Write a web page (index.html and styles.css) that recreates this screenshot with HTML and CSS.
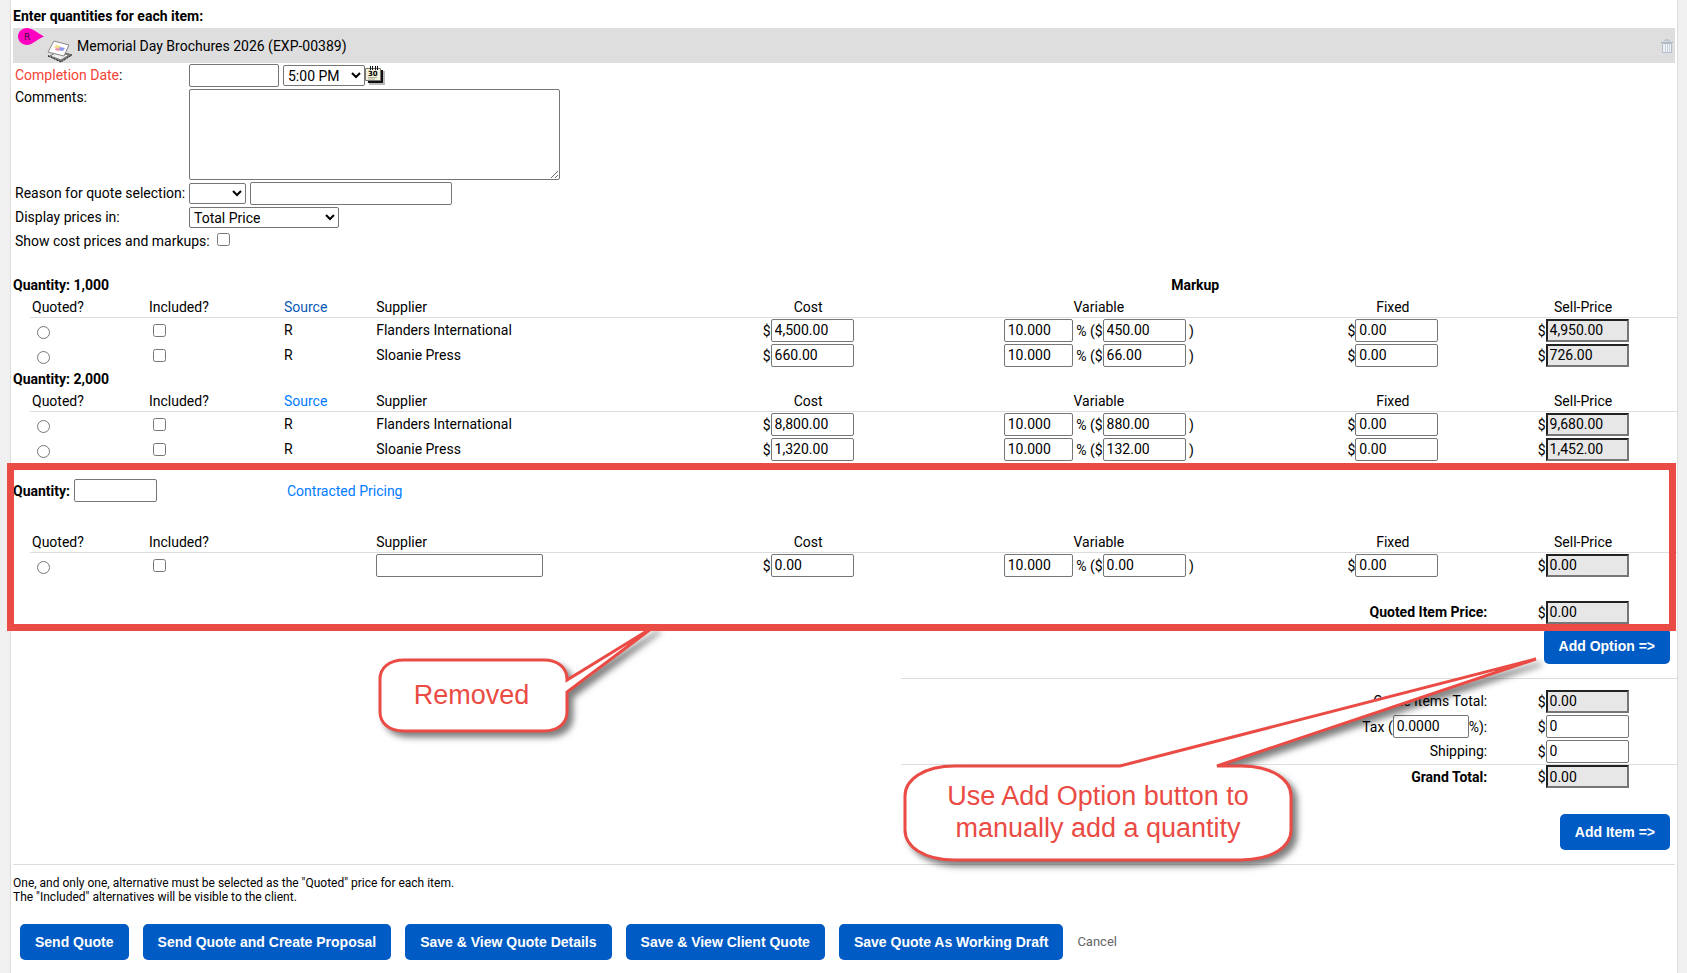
FILE: index.html
```html
<!DOCTYPE html>
<html lang="en">
<head>
<meta charset="utf-8">
<title>Quote quantities</title>
<link rel="stylesheet" href="styles.css">
</head>
<body>
<form class="page">
  <h1 class="title">Enter quantities for each item:</h1>

  <header class="item-bar">
    <svg class="tag-icon" width="26" height="17" viewBox="0 0 26 17" aria-hidden="true">
      <path d="M9 0C14 0 18 4 26 8.500C18 12 14 17 9 17C4 17 0 13 0 8.500C0 4 4 0 9 0Z" fill="#ff00c0"/>
      <text class="tag-letter" x="6" y="12">R</text>
    </svg>
    <svg class="item-icon" width="26" height="23" viewBox="0 0 26 23" aria-hidden="true">
      <path d="M1 16L14 22L25 15L18 13Z" fill="#777" stroke="#222" stroke-dasharray="2 1"/>
      <path d="M3 16L14 20L22 15L10 12Z" fill="#eee" stroke="#777"/>
      <path d="M7 1L22 5L17 16L1 12Z" fill="#fff" stroke="#888"/>
      <path d="M9 5L14 6L12 9L7 8Z" fill="#f2dc8c"/>
      <path d="M13 7L18 8L16 11L11 10Z" fill="#8d9bea"/>
      <path d="M9 8L13 9L12 11L8 10Z" fill="#ef8db5"/>
    </svg>
    <span class="item-name">Memorial Day Brochures 2026 (EXP-00389)</span>
    <button type="button" class="trash" aria-label="Delete item">
      <svg width="12" height="16" viewBox="0 0 12 16" aria-hidden="true">
        <path d="M4 3V2H8V3" fill="none" stroke="#a9b2bd"/>
        <path d="M1.500 5.500H10.500V14.500H1.500Z" fill="#eef2f6" stroke="#b4bdc8"/>
        <path d="M4.500 6V14M6.500 6V14M8.500 6V14" stroke="#ccd4dd"/>
        <path d="M0 4.500H12" stroke="#aeb8c3"/>
        <path d="M1 3.500H11" stroke="#d5dce4"/>
      </svg>
    </button>
  </header>

  <section class="details">
    <div class="field">
      <label class="name" for="date"><span class="required">Completion Date</span>:</label>
      <input id="date" class="box w-date" type="text">
      <select class="pick w-time" aria-label="Completion time"><option>5:00 PM</option></select>
      <svg class="calendar" width="21" height="20" viewBox="0 0 21 20" aria-hidden="true">
        <path d="M4 5H20V19H4Z" fill="#bbb"/>
        <path d="M3 4H18V17H3Z" fill="#111"/>
        <path d="M.5 2.500H15.500V14.500H.5Z" fill="#f4f2dc" stroke="#777"/>
        <path d="M3 11.500H12M3 13H10" stroke="#b5b29a"/>
        <path d="M5.500 0V4M7.500 0V4M10.500 0V4M12.500 0V4" stroke="#111"/>
        <text class="calendar-day" x="3" y="10">30</text>
      </svg>
    </div>
    <div class="field field-top">
      <label class="name" for="comments">Comments:</label>
      <textarea id="comments" class="comments"></textarea>
    </div>
    <div class="field">
      <label class="name" for="reason">Reason for quote selection:</label>
      <select id="reason" class="pick w-reason"><option></option></select>
      <input class="box w-note" type="text" aria-label="Reason details">
    </div>
    <div class="field field-short">
      <label class="name" for="display">Display prices in:</label>
      <select id="display" class="pick w-display"><option>Total Price</option></select>
    </div>
    <div class="field field-short">
      <label for="show-cost">Show cost prices and markups:</label>
      <input id="show-cost" class="show-cost" type="checkbox">
    </div>
  </section>

  <table class="prices">
    <colgroup><col class="c-edge"><col class="c-quoted"><col class="c-included"><col class="c-source"><col class="c-supplier"><col class="c-cost"><col class="c-variable"><col class="c-fixed"><col class="c-sell"></colgroup>
    <tr class="group"><th colspan="6">Quantity: 1,000</th><th colspan="2" class="mid">Markup</th><td></td></tr>
    <tr class="heads"><td></td><th>Quoted?</th><th>Included?</th><th><a href="#" class="visited">Source</a></th><th>Supplier</th><th class="mid">Cost</th><th class="mid">Variable</th><th class="mid">Fixed</th><th class="mid">Sell-Price</th></tr>
    <tr><td></td><td><input type="radio" name="quoted" aria-label="Quoted"></td><td><input type="checkbox" aria-label="Included"></td><td>R</td><td>Flanders International</td>
      <td class="mid">$<input class="box" value="4,500.00" aria-label="Cost"></td>
      <td class="mid"><input class="box w-rate" value="10.000" aria-label="Markup percent"> % ($<input class="box" value="450.00" aria-label="Markup amount"> )</td>
      <td class="mid">$<input class="box" value="0.00" aria-label="Fixed"></td>
      <td class="mid">$<input class="box locked" value="4,950.00" readonly aria-label="Sell-Price"></td></tr>
    <tr><td></td><td><input type="radio" name="quoted" aria-label="Quoted"></td><td><input type="checkbox" aria-label="Included"></td><td>R</td><td>Sloanie Press</td>
      <td class="mid">$<input class="box" value="660.00" aria-label="Cost"></td>
      <td class="mid"><input class="box w-rate" value="10.000" aria-label="Markup percent"> % ($<input class="box" value="66.00" aria-label="Markup amount"> )</td>
      <td class="mid">$<input class="box" value="0.00" aria-label="Fixed"></td>
      <td class="mid">$<input class="box locked" value="726.00" readonly aria-label="Sell-Price"></td></tr>
  </table>

  <table class="prices">
    <colgroup><col class="c-edge"><col class="c-quoted"><col class="c-included"><col class="c-source"><col class="c-supplier"><col class="c-cost"><col class="c-variable"><col class="c-fixed"><col class="c-sell"></colgroup>
    <tr class="group"><th colspan="9">Quantity: 2,000</th></tr>
    <tr class="heads"><td></td><th>Quoted?</th><th>Included?</th><th><a href="#">Source</a></th><th>Supplier</th><th class="mid">Cost</th><th class="mid">Variable</th><th class="mid">Fixed</th><th class="mid">Sell-Price</th></tr>
    <tr><td></td><td><input type="radio" name="quoted" aria-label="Quoted"></td><td><input type="checkbox" aria-label="Included"></td><td>R</td><td>Flanders International</td>
      <td class="mid">$<input class="box" value="8,800.00" aria-label="Cost"></td>
      <td class="mid"><input class="box w-rate" value="10.000" aria-label="Markup percent"> % ($<input class="box" value="880.00" aria-label="Markup amount"> )</td>
      <td class="mid">$<input class="box" value="0.00" aria-label="Fixed"></td>
      <td class="mid">$<input class="box locked" value="9,680.00" readonly aria-label="Sell-Price"></td></tr>
    <tr><td></td><td><input type="radio" name="quoted" aria-label="Quoted"></td><td><input type="checkbox" aria-label="Included"></td><td>R</td><td>Sloanie Press</td>
      <td class="mid">$<input class="box" value="1,320.00" aria-label="Cost"></td>
      <td class="mid"><input class="box w-rate" value="10.000" aria-label="Markup percent"> % ($<input class="box" value="132.00" aria-label="Markup amount"> )</td>
      <td class="mid">$<input class="box" value="0.00" aria-label="Fixed"></td>
      <td class="mid">$<input class="box locked" value="1,452.00" readonly aria-label="Sell-Price"></td></tr>
  </table>

  <section class="custom">
    <table class="prices">
      <colgroup><col class="c-edge"><col class="c-quoted"><col class="c-included"><col class="c-source"><col class="c-supplier"><col class="c-cost"><col class="c-variable"><col class="c-fixed"><col class="c-sell"></colgroup>
      <tr class="quantity-row"><th colspan="3"><label for="quantity">Quantity:</label> <input id="quantity" class="box" type="text"></th><td colspan="6" class="contracted"><a href="#">Contracted Pricing</a></td></tr>
      <tr class="heads"><td></td><th>Quoted?</th><th>Included?</th><th></th><th>Supplier</th><th class="mid">Cost</th><th class="mid">Variable</th><th class="mid">Fixed</th><th class="mid">Sell-Price</th></tr>
      <tr><td></td><td><input type="radio" name="quoted" aria-label="Quoted"></td><td><input type="checkbox" aria-label="Included"></td><td></td><td><input class="box w-supplier" aria-label="Supplier"></td>
        <td class="mid">$<input class="box" value="0.00" aria-label="Cost"></td>
        <td class="mid"><input class="box w-rate" value="10.000" aria-label="Markup percent"> % ($<input class="box" value="0.00" aria-label="Markup amount"> )</td>
        <td class="mid">$<input class="box" value="0.00" aria-label="Fixed"></td>
        <td class="mid">$<input class="box locked" value="0.00" readonly aria-label="Sell-Price"></td></tr>
      <tr class="item-price"><th colspan="8" class="end"><label for="item-price">Quoted Item Price:</label></th><td class="mid">$<input id="item-price" class="box locked" value="0.00" readonly></td></tr>
    </table>
    <div class="frame"></div>
    <div class="callout callout-removed">
      <svg class="callout-shape" width="290" height="116" viewBox="0 0 290 116" aria-hidden="true">
        <path d="M26 36H166C180 36 189 44 189 55V56L277 2L189 68V88C189 99 180 107 166 107H26C11 107 2 99 2 88V55C2 44 11 36 26 36Z"/>
      </svg>
      <p class="callout-text">Removed</p>
    </div>
  </section>

  <div class="action option-action">
    <button type="button" class="btn">Add Option =&gt;</button>
    <div class="callout callout-option">
      <svg class="callout-shape" width="650" height="216" viewBox="0 0 650 216" aria-hidden="true">
        <path d="M52 110H217L633 3L314 110H338C370 110 388 124 388 140V174C388 190 370 204 338 204H52C20 204 2 190 2 174V140C2 124 20 110 52 110Z"/>
      </svg>
      <p class="callout-text">Use Add Option button to<br>manually add a quantity</p>
    </div>
  </div>

  <table class="prices totals">
    <colgroup><col class="c-edge"><col class="c-quoted"><col class="c-included"><col class="c-source"><col class="c-supplier"><col class="c-cost"><col class="c-variable"><col class="c-fixed"><col class="c-sell"></colgroup>
    <tr class="first"><td colspan="6"></td><td colspan="2" class="end rule"><label for="items-total">Quote Items Total:</label></td><td class="mid rule">$<input id="items-total" class="box locked" value="0.00" readonly></td></tr>
    <tr><td colspan="6"></td><td colspan="2" class="end"><label for="tax-rate">Tax (</label><input id="tax-rate" class="box w-tax" value="0.0000">%):</td><td class="mid">$<input class="box" value="0" aria-label="Tax"></td></tr>
    <tr><td colspan="6"></td><td colspan="2" class="end"><label for="shipping">Shipping:</label></td><td class="mid">$<input id="shipping" class="box" value="0"></td></tr>
    <tr><td colspan="6"></td><th colspan="2" class="end rule"><label for="grand">Grand Total:</label></th><td class="mid rule">$<input id="grand" class="box locked" value="0.00" readonly></td></tr>
  </table>

  <div class="action item-action"><button type="button" class="btn">Add Item =&gt;</button></div>

  <footer class="foot">
    <p class="note">One, and only one, alternative must be selected as the "Quoted" price for each item.<br>The "Included" alternatives will be visible to the client.</p>
    <div class="buttons">
      <button type="button" class="btn">Send Quote</button>
      <button type="button" class="btn">Send Quote and Create Proposal</button>
      <button type="button" class="btn">Save &amp; View Quote Details</button>
      <button type="button" class="btn">Save &amp; View Client Quote</button>
      <button type="button" class="btn">Save Quote As Working Draft</button>
      <a href="#" class="cancel">Cancel</a>
    </div>
  </footer>
</form>
</body>
</html>
```
FILE: styles.css
```css
* { box-sizing: border-box; }

body {
  margin: 0;
  padding: 0 9px 0 10px;
  background: #f0f0f0;
  color: #000;
  font: 14px/20px Roboto, "Liberation Sans", sans-serif;
}

input, select, textarea, button { font: inherit; color: inherit; }
a { color: #007bff; text-decoration: none; }
a.visited { color: #0a58b5; }

.page {
  min-height: 100vh;
  padding: 6px 0 4px 2px;
  background: #fff;
  border: solid #ddd;
  border-width: 0 1px;
}

.title { margin: 0 0 2px; font-size: 14px; line-height: 20px; }

.item-bar {
  display: flex;
  align-items: center;
  height: 35px;
  margin-right: 2px;
  padding: 0 2px 0 5px;
  background: #dedede;
}
.tag-icon { align-self: flex-start; }
.tag-letter { font: 9px "DejaVu Sans", sans-serif; fill: #301030; }
.item-icon { align-self: flex-end; margin-left: 3px; }
.item-name { margin-left: 4px; }
.trash { display: flex; margin: 0 0 0 auto; padding: 0; border: 0; background: none; }

.details { padding-left: 2px; }
.field { display: flex; align-items: center; height: 25px; }
.field-top { align-items: flex-start; height: auto; padding: 1px 0; }
.field-short { height: 23px; }
.name { width: 174px; padding-bottom: 1px; }
.field-top .name { line-height: 16px; }
.required { color: #f44336; }

.box {
  width: 83px;
  height: 23px;
  padding: 0 3px;
  border: 1px solid #767676;
  border-radius: 2px;
  background: #fff;
  line-height: 20px;
}
.locked {
  padding: 0 2px;
  border: 2px solid #767676;
  border-top-color: #222;
  border-left-color: #222;
  border-radius: 0;
  background: #e7e7e7;
}
.w-date { width: 90px; }
.w-note { width: 202px; margin-left: 4px; }
.w-rate { width: 69px; }
.w-tax { width: 76px; }
.w-supplier { width: 167px; }

.pick { height: 21px; border: 1px solid #767676; border-radius: 2px; background: #fff; }
.w-time { width: 82px; margin-left: 4px; }
.w-reason { width: 57px; }
.w-display { width: 150px; }
.comments { width: 371px; height: 91px; border: 1px solid #767676; border-radius: 2px; }
.show-cost { margin: 0 0 2px 7px; }
.calendar-day { font: bold 7px "DejaVu Sans", sans-serif; }

.prices { width: 100%; border-spacing: 0; table-layout: fixed; }
.details + .prices { margin-top: 22px; }
.prices td, .prices th {
  height: 25px;
  padding: 0 2px;
  line-height: 23px;
  text-align: left;
  white-space: nowrap;
}
.prices th[colspan] { padding-left: 0; }
.prices .mid { padding: 0; text-align: center; }
.prices .end { text-align: right; }
.prices .group th, .prices .group td { height: 22px; line-height: 22px; }
.prices .heads th, .prices .heads td {
  height: 22px;
  padding-top: 2px;
  line-height: 19px;
  font-weight: 400;
}
.prices .heads th { border-bottom: 1px solid #ddd; }
.prices input[type="radio"] { display: block; margin: 3px 3px 0 5px; }
.prices input[type="checkbox"] { display: block; margin: 0 3px 0 4px; }

.c-edge { width: 17px; }
.c-quoted { width: 7.1%; }
.c-included { width: 8.2%; }
.c-source { width: 5.6%; }
.c-supplier { width: 20.7%; }
.c-cost { width: 11.3%; }
.c-variable { width: 24%; }
.c-fixed { width: 11.7%; }
.c-sell { width: 11.4%; }

.custom { position: relative; }
.prices .quantity-row th, .prices .quantity-row td { height: 69px; padding-bottom: 11px; }
.prices .contracted { padding-left: 5px; }
.prices .item-price th, .prices .item-price td { height: 47px; padding-top: 22px; }
.frame {
  position: absolute;
  z-index: 3;
  inset: 1px 1px -6px -6px;
  border: 7px solid #ea4b44;
  pointer-events: none;
}

.action { display: flex; justify-content: flex-end; padding-right: 7px; }
.option-action { position: relative; padding-top: 3px; margin-bottom: 14px; }
.item-action { padding: 25px 7px 14px 0; }
.btn {
  height: 36px;
  padding: 0 15px;
  border: 0;
  border-radius: 5px;
  background: #005bc4;
  color: #fff;
  font: bold 14px "Liberation Sans", Arial, sans-serif;
}

.totals .rule { border-top: 1px solid #ddd; }
.prices.totals .first td { height: 36px; padding-top: 10px; }

.callout { position: absolute; z-index: 2; color: #ea4b44; }
.callout-shape {
  display: block;
  overflow: visible;
  fill: #fff;
  stroke: #ea4b44;
  stroke-width: 3px;
  filter: drop-shadow(5px 5px 3px rgba(0, 0, 0, 0.5));
}
.callout-text {
  position: absolute;
  margin: 0;
  font: 27px/32px "Liberation Sans", Arial, sans-serif;
  text-align: center;
  white-space: nowrap;
}
.callout-removed { left: 365px; top: 162px; }
.callout-removed .callout-text { left: 0; top: 55px; width: 187px; }
.callout-option { right: 124px; top: 31px; }
.callout-option .callout-text { left: 2px; top: 124px; width: 386px; }

.foot { margin-right: 2px; border-top: 1px solid #ddd; }
.note { margin: 11px 0 0; font-size: 12px; line-height: 14px; }
.buttons { display: flex; align-items: center; gap: 14px; margin: 20px 0 0 7px; }
.cancel { color: #666; font-size: 13px; }
```
